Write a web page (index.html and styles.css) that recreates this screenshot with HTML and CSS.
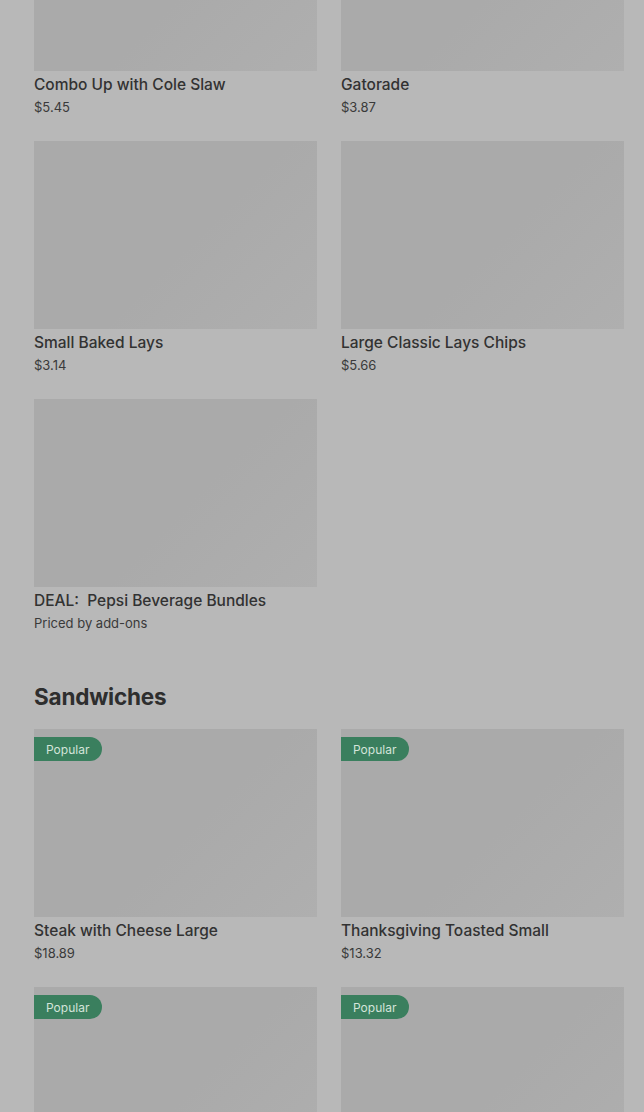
FILE: index.html
```html
<!DOCTYPE html>
<html>
<head>
<meta charset="utf-8">
<link rel="stylesheet" href="styles.css">
</head>
<body>
<div class="page">
  <section class="section">
    <div class="grid">
      <div class="card">
        <div class="thumb"></div>
        <div class="title">Combo Up with Cole Slaw</div>
        <div class="price">$5.45</div>
      </div>
      <div class="card">
        <div class="thumb"></div>
        <div class="title">Gatorade</div>
        <div class="price">$3.87</div>
      </div>
      <div class="card">
        <div class="thumb"></div>
        <div class="title">Small Baked Lays</div>
        <div class="price">$3.14</div>
      </div>
      <div class="card">
        <div class="thumb"></div>
        <div class="title">Large Classic Lays Chips</div>
        <div class="price">$5.66</div>
      </div>
      <div class="card">
        <div class="thumb"></div>
        <div class="title">DEAL:&nbsp; Pepsi Beverage Bundles</div>
        <div class="price">Priced by add-ons</div>
      </div>
    </div>
  </section>
  <section class="section">
    <h2 class="heading">Sandwiches</h2>
    <div class="grid">
      <div class="card">
        <div class="thumb"><span class="badge">Popular</span></div>
        <div class="title">Steak with Cheese Large</div>
        <div class="price">$18.89</div>
      </div>
      <div class="card">
        <div class="thumb"><span class="badge">Popular</span></div>
        <div class="title">Thanksgiving Toasted Small</div>
        <div class="price">$13.32</div>
      </div>
      <div class="card">
        <div class="thumb"><span class="badge">Popular</span></div>
      </div>
      <div class="card">
        <div class="thumb"><span class="badge">Popular</span></div>
      </div>
    </div>
  </section>
</div>
</body>
</html>
```

FILE: styles.css
```css
* { box-sizing: border-box; }
html, body {
  margin: 0;
  padding: 0;
  background: #b8b8b8;
  overflow: hidden;
}
body {
  font-family: "Inter", "Roboto", "Liberation Sans", sans-serif;
  color: #303030;
}
.page {
  margin-top: -117px;
  padding: 0 20px 0 34px;
}
.grid {
  display: grid;
  grid-template-columns: 1fr 1fr;
  column-gap: 24px;
  row-gap: 24px;
}
.card {
  display: flex;
  flex-direction: column;
  height: 234px;
}
.thumb {
  position: relative;
  height: 188px;
  background: linear-gradient(135deg, #aaaaaa 0%, #aaaaaa 55%, #afafaf 100%);
}
.title {
  margin-top: 2px;
  font-size: 15.5px;
  font-weight: 500;
  line-height: 24px;
  color: #323232;
  white-space: nowrap;
}
.price {
  margin-top: 0;
  font-size: 13px;
  line-height: 20px;
  color: #3a3a3a;
}
.heading {
  margin: 48px 0 16px;
  font-size: 22.5px;
  font-weight: 700;
  line-height: 32px;
  color: #2e2e2e;
  letter-spacing: -0.2px;
}
.badge {
  position: absolute;
  top: 8px;
  left: 0;
  height: 24px;
  padding: 0 13px 0 12px;
  display: flex;
  align-items: center;
  background: #3a7f5e;
  color: #d4e4da;
  font-size: 12px;
  border-radius: 0 12px 12px 0;
}
```
